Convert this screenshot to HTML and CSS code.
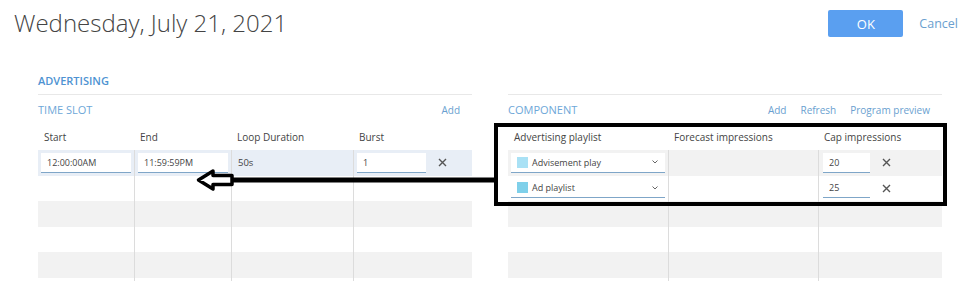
FILE: index.html
```html
<!DOCTYPE html>
<html lang="en">
<head>
    <meta charset="UTF-8">
    <title>Advertising schedule</title>
    <link rel="stylesheet" href="styles.css">
</head>
<body>
    <div class="page">
        <div class="topbar">
            <h1 class="day-title">Wednesday, July 21, 2021</h1>
            <div class="actions">
                <button class="btn-ok" type="button">OK</button>
                <a class="link cancel" href="#">Cancel</a>
            </div>
        </div>

        <div class="panels">
            <!-- time slots -->
            <div class="panel">
                <div class="section-head">ADVERTISING</div>
                <div class="table-head">
                    <span class="table-title">TIME SLOT</span>
                    <div class="table-links"><a class="link" href="#">Add</a></div>
                </div>
                <div class="row head slot-cols">
                    <div class="cell">Start</div>
                    <div class="cell">End</div>
                    <div class="cell">Loop Duration</div>
                    <div class="cell">Burst</div>
                </div>
                <div class="row selected slot-cols">
                    <div class="cell fld"><input class="text-input" type="text" value="12:00:00AM"></div>
                    <div class="cell fld"><input class="text-input" type="text" value="11:59:59PM"></div>
                    <div class="cell">50s</div>
                    <div class="cell fld">
                        <input class="text-input burst" type="text" value="1">
                        <span class="remove"><svg width="9" height="9" viewBox="0 0 9 9"><path d="M1 1L8 8M8 1L1 8" stroke="#555" stroke-width="1.4"/></svg></span>
                    </div>
                </div>
                <div class="row slot-cols"><div class="cell"></div><div class="cell"></div><div class="cell"></div><div class="cell"></div></div>
                <div class="row stripe slot-cols"><div class="cell"></div><div class="cell"></div><div class="cell"></div><div class="cell"></div></div>
                <div class="row slot-cols"><div class="cell"></div><div class="cell"></div><div class="cell"></div><div class="cell"></div></div>
                <div class="row stripe slot-cols"><div class="cell"></div><div class="cell"></div><div class="cell"></div><div class="cell"></div></div>
                <div class="row slot-cols"><div class="cell"></div><div class="cell"></div><div class="cell"></div><div class="cell"></div></div>
            </div>

            <!-- components -->
            <div class="panel">
                <div class="section-head"></div>
                <div class="table-head">
                    <span class="table-title">COMPONENT</span>
                    <div class="table-links">
                        <a class="link" href="#">Add</a>
                        <a class="link" href="#">Refresh</a>
                        <a class="link" href="#">Program preview</a>
                    </div>
                </div>
                <div class="row head comp-cols">
                    <div class="cell">Advertising playlist</div>
                    <div class="cell">Forecast impressions</div>
                    <div class="cell">Cap impressions</div>
                </div>
                <div class="row stripe comp-cols">
                    <div class="cell fld">
                        <div class="picker">
                            <span class="swatch light"></span>
                            <span class="picker-text">Advisement play</span>
                            <svg class="chevron" width="6" height="4" viewBox="0 0 6 4"><path d="M0.5 0.5L3 3L5.5 0.5" fill="none" stroke="#666" stroke-width="1"/></svg>
                        </div>
                    </div>
                    <div class="cell"></div>
                    <div class="cell fld">
                        <input class="text-input cap" type="text" value="20">
                        <span class="remove"><svg width="9" height="9" viewBox="0 0 9 9"><path d="M1 1L8 8M8 1L1 8" stroke="#555" stroke-width="1.4"/></svg></span>
                    </div>
                </div>
                <div class="row comp-cols">
                    <div class="cell fld">
                        <div class="picker">
                            <span class="swatch"></span>
                            <span class="picker-text">Ad playlist</span>
                            <svg class="chevron" width="6" height="4" viewBox="0 0 6 4"><path d="M0.5 0.5L3 3L5.5 0.5" fill="none" stroke="#666" stroke-width="1"/></svg>
                        </div>
                    </div>
                    <div class="cell"></div>
                    <div class="cell fld">
                        <input class="text-input cap" type="text" value="25">
                        <span class="remove"><svg width="9" height="9" viewBox="0 0 9 9"><path d="M1 1L8 8M8 1L1 8" stroke="#555" stroke-width="1.4"/></svg></span>
                    </div>
                </div>
                <div class="row stripe comp-cols"><div class="cell"></div><div class="cell"></div><div class="cell"></div></div>
                <div class="row comp-cols"><div class="cell"></div><div class="cell"></div><div class="cell"></div></div>
                <div class="row stripe comp-cols"><div class="cell"></div><div class="cell"></div><div class="cell"></div></div>
                <div class="row comp-cols"><div class="cell"></div><div class="cell"></div><div class="cell"></div></div>
            </div>
        </div>

        <!-- annotation drawn over the screenshot -->
        <div class="callout-box"></div>
        <svg class="callout-arrow" width="979" height="281" viewBox="0 0 979 281">
            <path d="M231 180H497" stroke="#000" stroke-width="5"/>
            <path d="M232 175.5H213V171L198.5 180L213 189V184.5H232Z" fill="#fff" stroke="#000" stroke-width="3.5" stroke-linejoin="round"/>
        </svg>
    </div>
</body>
</html>
```

FILE: styles.css
```css
body {
    margin: 0;
    font-family: "Open Sans", "DejaVu Sans", sans-serif;
    background: #fff;
    color: #444;
    overflow: hidden;
}
.page {
    position: relative;
    width: 979px;
    height: 281px;
    overflow: hidden;
}
.topbar {
    display: flex;
    justify-content: space-between;
    align-items: flex-start;
    padding: 6px 21px 0 14px;
    height: 62px;
    box-sizing: border-box;
}
.day-title {
    margin: 0;
    font-size: 24px;
    font-weight: 300;
    line-height: 34px;
    color: #444;
}
.actions {
    display: flex;
    align-items: center;
    gap: 16px;
    margin-top: 4px;
}
.btn-ok {
    width: 75px;
    height: 27px;
    border: none;
    border-radius: 2px;
    background: #5a9ff0;
    color: #fff;
    font-family: inherit;
    font-size: 13px;
    padding: 0;
}
.link {
    color: #6a9fd0;
    text-decoration: none;
    font-size: 10px;
}
.cancel {
    font-size: 12.5px;
    color: #6b9fcf;
}

.panels {
    display: flex;
    gap: 36px;
    padding: 6px 37px 0 38px;
}
.panel {
    width: 434px;
}
.section-head {
    height: 26px;
    line-height: 26px;
    border-bottom: 1px solid #e8e8e8;
    color: #4e93d2;
    font-size: 11px;
    font-weight: 600;
}
.table-head {
    display: flex;
    justify-content: space-between;
    align-items: center;
    height: 29px;
}
.table-title {
    color: #6ea7d8;
    font-size: 11px;
}
.table-links {
    display: flex;
    gap: 14px;
    padding-right: 12px;
}

.row {
    display: grid;
    height: 25.5px;
    font-size: 9.5px;
    color: #444;
}
.slot-cols {
    grid-template-columns: 96px 97px 122px 119px;
}
.comp-cols {
    grid-template-columns: 160px 150px 124px;
}
.row.head {
    height: 26px;
    font-size: 10px;
    line-height: 22px;
}
.row.head .cell {
    border-left: none;
}
.cell {
    display: flex;
    align-items: center;
    padding-left: 6px;
    border-left: 1px solid #dcdcdc;
    min-width: 0;
}
.cell:first-child {
    border-left: none;
}
.cell.fld {
    padding: 0 3px;
}
.row.selected {
    background: #e8eef6;
}
.row.stripe {
    background: #f2f2f2;
}

.text-input {
    width: 100%;
    height: 20px;
    box-sizing: border-box;
    border: none;
    border-bottom: 1px solid #7fa6c8;
    background: #fff;
    font-family: inherit;
    font-size: 9px;
    color: #444;
    padding: 0 6px;
    outline: none;
}
.text-input.burst {
    width: 69px;
}
.text-input.cap {
    width: 47px;
    margin-left: 1px;
}
.remove {
    display: flex;
    margin-left: 12px;
}

.picker {
    display: flex;
    align-items: center;
    width: 100%;
    height: 20px;
    box-sizing: border-box;
    background: #fff;
    border-bottom: 1px solid #7fa6c8;
    padding: 0 7px 0 6px;
    font-size: 9px;
}
.swatch {
    width: 11px;
    height: 11px;
    background: #7fd0ea;
    margin-right: 4px;
}
.swatch.light {
    background: #a9e1f5;
}
.picker-text {
    flex: 1;
}

.callout-box {
    position: absolute;
    left: 494px;
    top: 123px;
    width: 453px;
    height: 83px;
    box-sizing: border-box;
    border: 4.5px solid #000;
}
.callout-arrow {
    position: absolute;
    left: 0;
    top: 0;
}
```
